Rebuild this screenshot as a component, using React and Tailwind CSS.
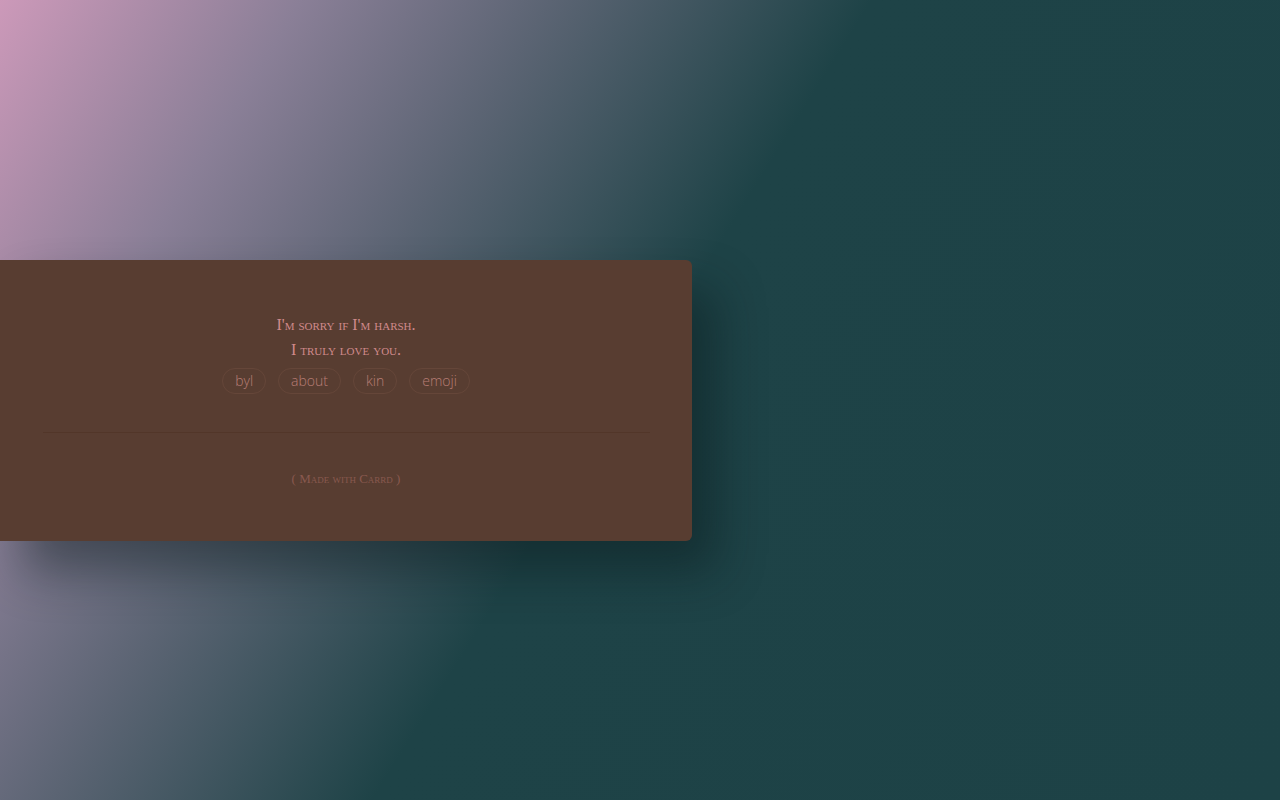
const links = ["byl", "about", "kin", "emoji"];

export default function App() {
  return (
    <main className="flex h-screen w-full items-center overflow-hidden bg-[linear-gradient(122deg,#cc99b9_0%,#8a7f97_17%,#5b6473_31%,#1e4347_49%,#1d4246_100%)]">
      {/* card, runs off the left edge */}
      <section className="flex h-[281px] w-[692px] flex-col items-center rounded-r-md bg-[#583d31] pt-[52px] shadow-[24px_30px_48px_rgba(8,24,26,0.45)]">
        <h1
          className="text-center text-[16px] leading-[25px] text-[#d08a8c] [font-variant:small-caps]"
          style={{ fontFamily: '"Liberation Serif", serif' }}
        >
          I'm sorry if I'm harsh.
          <br />
          I truly love you.
        </h1>

        <nav className="mt-[6px] flex gap-3">
          {links.map((l) => (
            <a
              key={l}
              href="#"
              className="flex h-[26px] items-center rounded-full border border-[#654639] px-[12px] text-[14px] font-light text-[#b97d76]"
              style={{ fontFamily: '"Open Sans", sans-serif' }}
            >
              {l}
            </a>
          ))}
        </nav>

        <hr className="mt-[38px] w-[607px] border-t border-[#523629]" />

        <p
          className="mt-[36px] text-[13px] leading-[20px] text-[#89594f] [font-variant:small-caps]"
          style={{ fontFamily: '"Liberation Serif", serif' }}
        >
          ( Made with Carrd )
        </p>
      </section>
    </main>
  );
}
